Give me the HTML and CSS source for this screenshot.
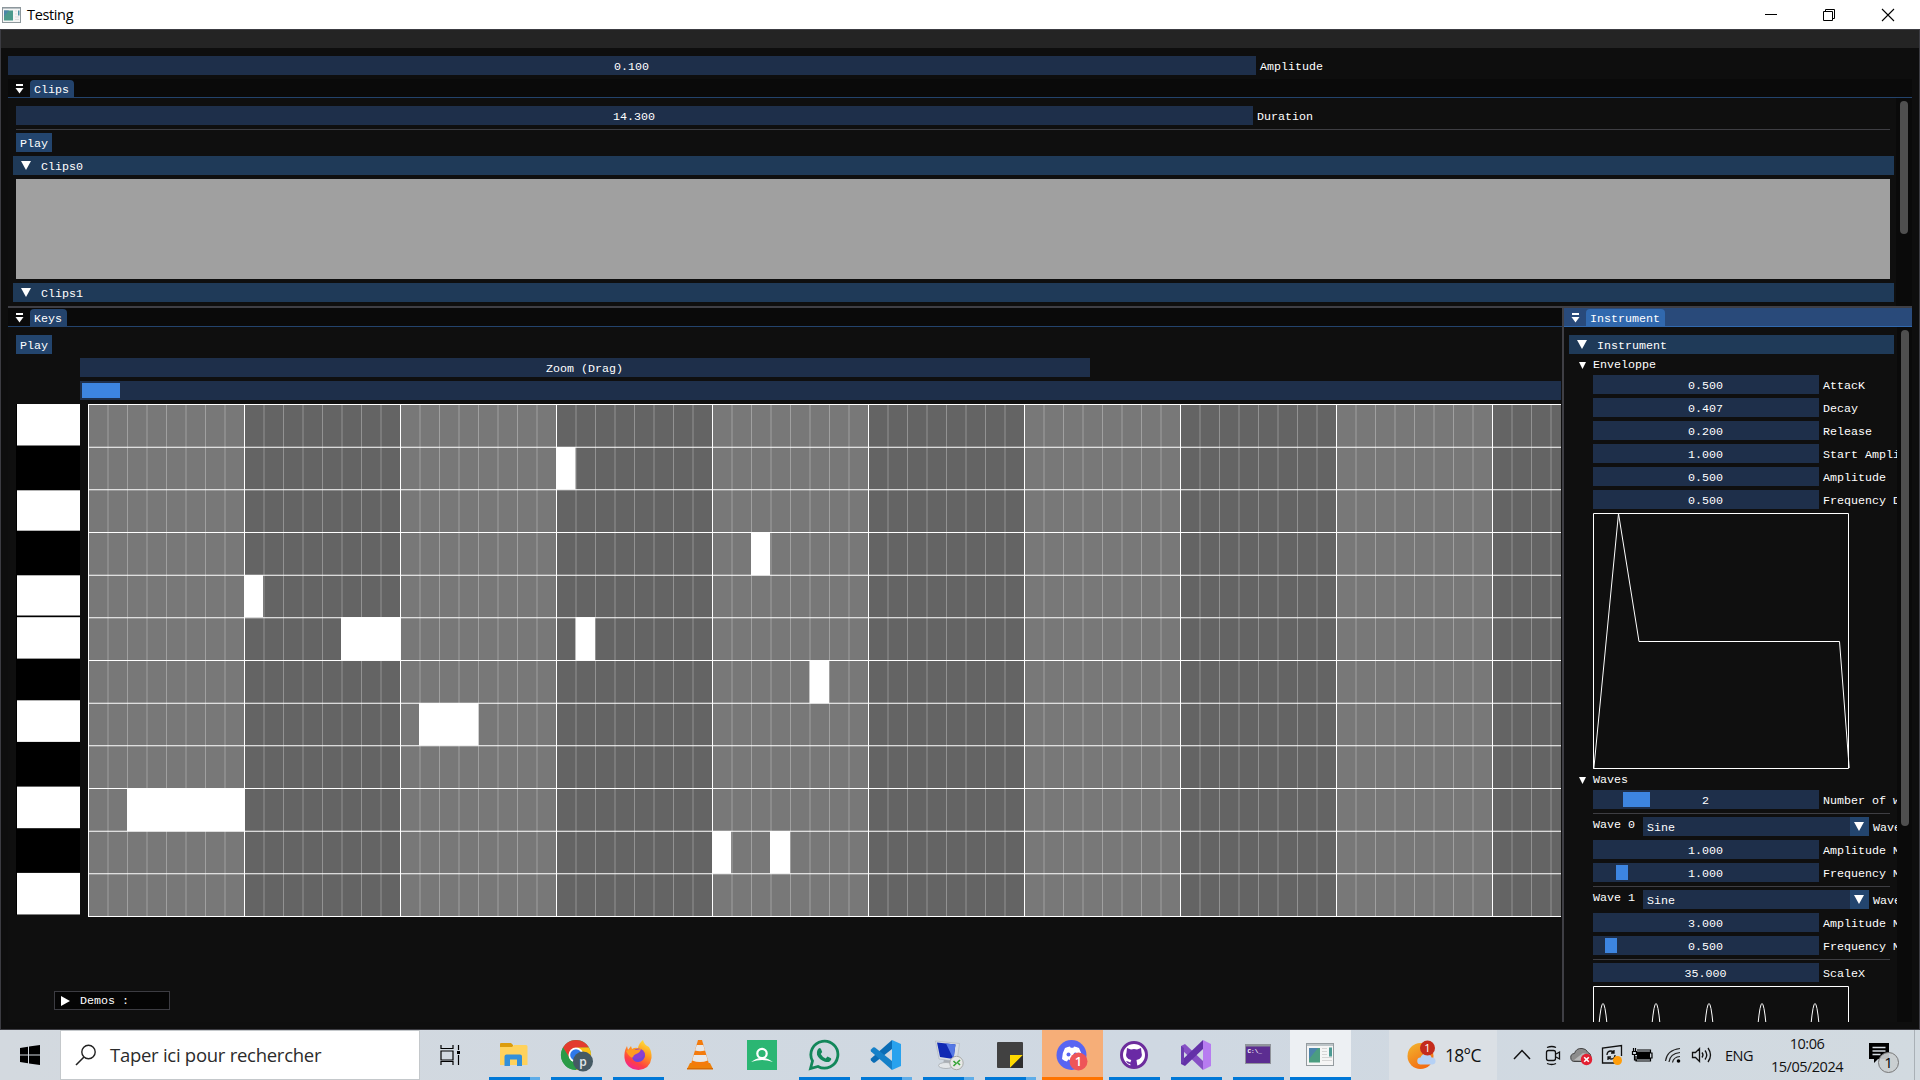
FILE: index.html
```
<!DOCTYPE html>
<html lang="fr">
<head>
<meta charset="utf-8">
<title>Testing</title>
<link rel="stylesheet" href="styles.css">
</head>
<body>
<header class="titlebar">
  <svg class="app-icon" width="19" height="16" viewBox="0 0 19 16"><rect x=".5" y=".5" width="18" height="15" fill="#f4f4f4" stroke="#8d979c"/><path d="M1 1.5h17" stroke="#b9c1c5"/><rect x="2" y="3.500" width="9" height="10" fill="#4b9a8c"/><path d="M2 3.500h5l-5 6z" fill="#4a86a8"/><path d="M13 4h2M13 7h2M13 10h4M13 12.500h4" stroke="#ddd"/><rect x="16" y="3.500" width="1.500" height="5" fill="#4c93a5"/></svg>
  <span class="title">Testing</span>
  <div class="window-buttons">
    <svg width="14" height="14" viewBox="0 0 14 14"><path d="M2 6.500h12" stroke="#000"/></svg>
    <svg width="14" height="14" viewBox="0 0 14 14"><path d="M1.500 3.500h9v9h-9zM3.500 3.500v-2h9v9h-2" fill="none" stroke="#000"/></svg>
    <svg width="14" height="14" viewBox="0 0 14 14"><path d="M1 1l12 12M13 1L1 13" stroke="#000" stroke-width="1.100"/></svg>
  </div>
</header>

<main class="app">
  <div class="menubar"></div>
  <div class="dock">
    <div class="row"><div class="slider amp">0.100</div><span class="label">Amplitude</span></div>

    <section class="panel clips">
      <div class="tabbar"><svg class="menu-mark" width="9" height="10"><path d="M1 0h7v2H1z" fill="#fff"/><path d="M.5 4h8L4.500 9.500z" fill="#fff"/></svg><span class="tab">Clips</span></div>
      <div class="clips-body">
        <div class="clips-content">
          <div class="row"><div class="slider duration">14.300</div><span class="label">Duration</span></div>
          <div class="separator"></div>
          <div class="button">Play</div>
          <div class="header"><svg class="arrow" width="10" height="9"><path d="M0 0h10L5 9z" fill="#fff"/></svg>Clips0</div>
          <div class="clip-canvas"></div>
          <div class="header"><svg class="arrow" width="10" height="9"><path d="M0 0h10L5 9z" fill="#fff"/></svg>Clips1</div>
        </div>
        <div class="scrollbar"><div class="thumb clips-thumb"></div></div>
      </div>
    </section>

    <div class="lower">
      <section class="panel keys">
        <div class="tabbar"><svg class="menu-mark" width="9" height="10"><path d="M1 0h7v2H1z" fill="#fff"/><path d="M.5 4h8L4.500 9.500z" fill="#fff"/></svg><span class="tab">Keys</span></div>
        <div class="keys-content">
          <div class="button">Play</div>
          <div class="slider zoom">Zoom (Drag)</div>
          <div class="slider scroll-x"><div class="grab scroll-grab"></div></div>
          <div class="roll">
            <svg class="piano" width="64" height="511" viewBox="0 0 64 511">
              <rect width="64" height="511" fill="#000"/>
              <g fill="#fff">
                <rect x="1" y="0" width="63" height="41.500"/>
                <rect x="1" y="86.300" width="63" height="40.400"/>
                <rect x="1" y="171.300" width="63" height="40.200"/>
                <rect x="1" y="213.200" width="63" height="41.400"/>
                <rect x="1" y="296.300" width="63" height="41.600"/>
                <rect x="1" y="382.600" width="63" height="41.600"/>
                <rect x="1" y="468.900" width="63" height="41.600"/>
              </g>
            </svg>
            <svg class="grid" width="1473" height="513" viewBox="0 0 1473 513">
              <rect width="1473" height="513" fill="#787878"/>
              <path d="M156 256.500H1473" stroke="#646464" stroke-width="513" stroke-dasharray="156"/>
              <path d="M0 256.500H1473" stroke="#fff" stroke-opacity=".3" stroke-width="513" stroke-dasharray="1 18.500"/>
              <path d="M0 256.500H1473" stroke="#fff" stroke-width="513" stroke-dasharray="1 155"/>
              <path d="M736.500 0V513" stroke="#fff" stroke-width="1473" stroke-dasharray="1 41.6667"/>
              <g fill="#fff">
                <rect x="468" y="43" width="19.500" height="42.500"/>
                <rect x="663" y="128" width="19" height="43"/>
                <rect x="156" y="171" width="19" height="42"/>
                <rect x="253" y="213" width="60" height="43"/>
                <rect x="487.500" y="213" width="19.500" height="43"/>
                <rect x="721.500" y="256" width="19.500" height="43"/>
                <rect x="331" y="299" width="59.500" height="42.500"/>
                <rect x="39" y="384" width="118" height="43"/>
                <rect x="624" y="427" width="19" height="42.500"/>
                <rect x="682" y="427" width="20" height="42.500"/>
              </g>
            </svg>
          </div>
          <div class="demos"><svg width="9" height="10"><path d="M0 0l9 5-9 5z" fill="#fff"/></svg>Demos :</div>
        </div>
      </section>

      <section class="panel instrument">
        <div class="tabbar focused"><svg class="menu-mark" width="9" height="10"><path d="M1 0h7v2H1z" fill="#fff"/><path d="M.5 4h8L4.500 9.500z" fill="#fff"/></svg><span class="tab">Instrument</span></div>
        <div class="inst-body">
          <div class="inst-content">
            <div class="header"><svg class="arrow" width="10" height="9"><path d="M0 0h10L5 9z" fill="#fff"/></svg>Instrument</div>
            <div class="tree"><svg width="7" height="7"><path d="M0 0h7L3.500 7z" fill="#fff"/></svg>Enveloppe</div>
            <div class="row"><div class="slider">0.500</div><span class="label">AttacK</span></div>
            <div class="row"><div class="slider">0.407</div><span class="label">Decay</span></div>
            <div class="row"><div class="slider">0.200</div><span class="label">Release</span></div>
            <div class="row"><div class="slider">1.000</div><span class="label">Start Amplitude</span></div>
            <div class="row"><div class="slider">0.500</div><span class="label">Amplitude</span></div>
            <div class="row"><div class="slider">0.500</div><span class="label">Frequency D</span></div>
            <svg class="plot" width="257" height="256" viewBox="0 0 257 256"><g fill="none" stroke="#fff"><path d="M.5.500h255v255H.5z"/><path d="M.8 256L25.500.500 46 128.500H246.500L256.200 255"/></g></svg>
            <div class="tree"><svg width="7" height="7"><path d="M0 0h7L3.500 7z" fill="#fff"/></svg>Waves</div>
            <div class="row"><div class="slider">2<div class="grab count-grab"></div></div><span class="label">Number of waves</span></div>
            <div class="separator"></div>
            <div class="row"><span class="wave-name">Wave 0</span><div class="combo">Sine<span class="drop"><svg width="10" height="9"><path d="M0 0h10L5 9z" fill="#fff"/></svg></span></div><span class="label">Wave</span></div>
            <div class="row"><div class="slider">1.000</div><span class="label">Amplitude M</span></div>
            <div class="row"><div class="slider">1.000<div class="grab freq0-grab"></div></div><span class="label">Frequency M</span></div>
            <div class="separator"></div>
            <div class="row"><span class="wave-name">Wave 1</span><div class="combo">Sine<span class="drop"><svg width="10" height="9"><path d="M0 0h10L5 9z" fill="#fff"/></svg></span></div><span class="label">Wave</span></div>
            <div class="row"><div class="slider">3.000</div><span class="label">Amplitude M</span></div>
            <div class="row"><div class="slider">0.500<div class="grab freq1-grab"></div></div><span class="label">Frequency M</span></div>
            <div class="separator"></div>
            <div class="row"><div class="slider">35.000</div><span class="label">ScaleX</span></div>
            <svg class="plot" width="257" height="256" viewBox="0 0 257 256"><g fill="none" stroke="#fff"><path d="M.5.500h255v255H.5z"/><path d="M6 38Q8 17.500 10 17.500T14 38M59 38Q61 17.500 63 17.500T67 38M112 38Q114 17.500 116 17.500T120 38M165 38Q167 17.500 169 17.500T173 38M218 38Q220 17.500 222 17.500T226 38"/></g></svg>
          </div>
          <div class="scrollbar"><div class="thumb inst-thumb"></div></div>
        </div>
      </section>
    </div>
  </div>
</main>

<footer class="taskbar">
  <div class="start"><svg width="20" height="20" viewBox="0 0 20 20"><path d="M0 3l8-1.200v7.700H0zM9 1.600L20 0v9.500H9zM0 10.500h8v7.700L0 17zM9 10.500h11V20L9 18.400z"/></svg></div>
  <div class="search"><svg width="22" height="22" viewBox="0 0 22 22"><circle cx="13.500" cy="8" r="6.700" fill="none" stroke="#222" stroke-width="1.400"/><path d="M9 13L1 21" stroke="#222" stroke-width="1.600"/></svg><span class="search-text">Taper ici pour rechercher</span></div>
  <div class="task-view"><svg width="20" height="20" viewBox="0 0 20 20" fill="none" stroke="#000" stroke-width="1.200"><path d="M1 0v3.500h12V0M1 6h12v9H1zM1 20v-3.500h12V20M18.500 0v5M18.500 10v10"/><path d="M17 6h3v3h-3z" fill="#000" stroke="none"/></svg></div>
  <nav class="tasks">
    <div class="task open multi"><svg class="explorer" width="32" height="32" viewBox="0 0 32 32"><path d="M4 5q0-1 1-1h10l2 2v2H4z" fill="#dc9c0c"/><path d="M4 8h12l2-2h12q1.500 0 1.500 1.500V26H4z" fill="#ffd25c"/><path d="M8.500 27V17.500q0-2 2-2h13.500q2 0 2 2V27h-5v-6.500h-7V27z" fill="#3390da"/></svg></div>
    <div class="task open"><svg class="chrome" width="34" height="34" viewBox="0 0 34 34"><circle cx="16" cy="16" r="15" fill="#34a853"/><path d="M3 8.500A15 15 0 0 1 29 8.500L16 9 10 20z" fill="#e33b2e"/><path d="M29 8.500A15 15 0 0 1 16 31l6.500-11.500L17 8.500z" fill="#fbc116"/><path d="M3 8.500A15 15 0 0 0 16 31l4-8-10-3z" fill="#2a9b48"/><circle cx="16" cy="16" r="7.500" fill="#fff"/><circle cx="16" cy="16" r="5.800" fill="#2f79ea"/><circle cx="23" cy="22.500" r="10" fill="#455a64"/><text x="23" y="26.500" text-anchor="middle" class="avatar">p</text></svg></div>
    <div class="task open"><svg width="32" height="32" viewBox="0 0 32 32"><defs><linearGradient id="ff" x1=".8" y1="0" x2=".3" y2="1"><stop offset="0" stop-color="#ffe73e"/><stop offset=".4" stop-color="#ff9a1f"/><stop offset=".75" stop-color="#ff4141"/><stop offset="1" stop-color="#f0229a"/></linearGradient></defs><path d="M5 7l1 4 3-4 1 3q3-2 6-1Q17 4 21 1q1 5 6 7 3 5 2.500 11-1.500 11-13 12Q4 30 2.500 19 2 12 5 7z" fill="url(#ff)"/><circle cx="16.500" cy="16" r="6.500" fill="#8a3fd2"/><path d="M4 12q4-3 9-1l6-1q-1 4-5 5-3 1-3 4-4-1-7-7z" fill="#ff9b22"/><path d="M10 18q6 5 13-2-1 7-7 7-5 0-6-5z" fill="#7145d8"/></svg></div>
    <div class="task"><svg class="vlc" width="32" height="32" viewBox="0 0 32 32"><path d="M6 24h20l3 6H3z" fill="#ee8008"/><path d="M14 1h4l7 24q-9 4-18 0z" fill="#f47b0c"/><path d="M12.700 6h6.600l1.700 5.500q-5 1.500-10 0zM9.800 16h12.400l1.600 5.500q-7.800 3-15.600 0z" fill="#e6e8ea"/><path d="M3 29h26v1.500H3z" fill="#d66b05"/></svg></div>
    <div class="task"><svg width="30" height="30" viewBox="0 0 30 30"><rect width="30" height="30" fill="#2bb673"/><circle cx="15" cy="13.500" r="4.700" fill="none" stroke="#fff" stroke-width="2.200"/><path d="M4 22q5-3.500 8.500-4h5q3.500.500 8.500 4-6-2-11-2t-11 2z" fill="#fff"/></svg></div>
    <div class="task open"><svg width="32" height="32" viewBox="0 0 32 32"><path d="M2.500 29.500l2-7.500A13.500 13.500 0 1 1 10 27.500z" fill="none" stroke="#12875a" stroke-width="2.800"/><path d="M9.500 11q2-3.500 3.500-1l1.200 3-1.500 2q2 3.500 5 4.500l1.800-2 3.500 1.700q1 1-1 3-2 1.500-5 .5-6-2-8-7-.5-2.500.5-4.700z" fill="#12875a"/></svg></div>
    <div class="task open multi"><svg width="32" height="32" viewBox="0 0 32 32"><path d="M22 1l9 4v22l-9 4z" fill="#29a2ee"/><path d="M22 1v9L5 23.500q-1 .5-2 0l-2-2q-.7-1 0-2z" fill="#0a6cb5"/><path d="M22 31v-9L5 8.500q-1-.5-2 0l-2 2q-.7 1 0 2z" fill="#1580c8"/></svg></div>
    <div class="task open multi"><svg width="32" height="32" viewBox="0 0 32 32"><path d="M12 20h7l1 5H11z" fill="#a9aeb5"/><ellipse cx="14" cy="26.500" rx="7.500" ry="3" fill="#e3e6e9" stroke="#b0b5ba"/><path d="M3.500 2l24 2.500-2.500 18L7 20z" fill="#d9dee4" stroke="#adb3bb" stroke-width=".6"/><path d="M5 3.500l18.500 2-2 14.500L8 18z" fill="#102ab4"/><path d="M14 4.500l9.500 1-2 14.500z" fill="#5578e4"/><circle cx="24.500" cy="24" r="6.700" fill="#e7e8e6" stroke="#a7a9a7"/><path d="M21.500 22l2.500 2.500-2.500 2.500M28 21l-2.500 2.500 2.500 2.500" fill="none" stroke="#37a536" stroke-width="1.600"/></svg></div>
    <div class="task open multi"><svg width="26" height="26" viewBox="0 0 26 26"><rect width="26" height="26" rx="1" fill="#414141"/><path d="M13 13h13L13 26z" fill="#ffda00"/><path d="M26 13v13H13z" fill="#2e2e2e"/></svg></div>
    <div class="task open alert"><svg width="32" height="32" viewBox="0 0 32 32"><circle cx="15.500" cy="16" r="15" fill="#5865f2"/><path d="M9 9q3-1.500 5-1.500l.7 1.200h2.600L18 7.500q2 0 5 1.500 3 5 3 11-2.500 2-5 2.500l-1.200-2q-4 1-7.600 0l-1.200 2Q8.500 22 6 20q0-6 3-11z" fill="#fff"/><circle cx="12.500" cy="15.500" r="2" fill="#5865f2"/><circle cx="19.500" cy="15.500" r="2" fill="#5865f2"/><circle cx="22.500" cy="22.500" r="9" fill="#ee5558"/><text x="22.500" y="27" text-anchor="middle" class="badge-text">1</text></svg></div>
    <div class="task open"><svg width="30" height="30" viewBox="0 0 30 30"><circle cx="15" cy="15" r="12.500" fill="#fff" stroke="#6c2d9c" stroke-width="3"/><path d="M8 8l4 1.500q3-.8 6 0L22 8l.5 4.500q2 6-5 7.500l1 7h-7l-.2-3q-3 0-4.300-3 2 0 4.300 1.500l1-2.500q-7-1.500-4.800-7.500z" fill="#6a2aa5"/></svg></div>
    <div class="task open"><svg width="32" height="32" viewBox="0 0 32 32"><path d="M23 1l8 4v22l-8 4z" fill="#b77cf0"/><path d="M1 7l4-2 18 17v9L1 10z" fill="#8650c5"/><path d="M1 25l4 2L23 10V1L1 22z" fill="#6331a8"/><path d="M1 7l3 2v14l-3 2z" fill="#6b3cb0"/></svg></div>
    <div class="task open"><svg class="raised" width="26" height="20" viewBox="0 0 26 20"><rect x=".5" y=".5" width="25" height="19" fill="#5c2d91" stroke="#8f9299"/><path d="M0 1.500h26" stroke="#91969c" stroke-width="2"/><text x="2.500" y="9" class="prompt">C:\_</text></svg></div>
    <div class="task open current"><svg class="raised" width="28" height="23" viewBox="0 0 28 23"><rect x=".5" y=".5" width="27" height="22" fill="#f5f5f5" stroke="#949b9f"/><path d="M1 2h26" stroke="#bcc4c7" stroke-width="2"/><rect x="3" y="5" width="11" height="14.500" fill="#4b9d80"/><path d="M3 5h9L3 16z" fill="#4b83aa"/><path d="M16 5.500h5M16 8.500h5M16 11.500h5M16 14.500h10M16 17.500h10" stroke="#d5d5d5"/><rect x="23" y="4.500" width="3" height="9" fill="#4c9a93"/></svg></div>
  </nav>
  <div class="weather"><svg width="30" height="30" viewBox="0 0 30 30"><defs><linearGradient id="sun" x1="0" y1="0" x2=".6" y2="1"><stop offset="0" stop-color="#f2b72f"/><stop offset="1" stop-color="#f36b12"/></linearGradient></defs><circle cx="13.500" cy="16" r="13" fill="url(#sun)"/><path d="M14 24.500a3.500 3.500 0 0 1-.5-7q2-4.500 7-3.500 3 0 4 3.500a3.500 3.500 0 0 1 1 7z" fill="#b5d1f5"/><circle cx="20.500" cy="8" r="7.500" fill="#c42b1c"/><text x="20.500" y="12" text-anchor="middle" class="badge-small">1</text></svg><span class="temp">18°C</span></div>
  <div class="tray">
    <svg width="24" height="24" viewBox="0 0 24 24"><path d="M4 16l8-8.500 8 8.500" fill="none" stroke="#111" stroke-width="1.500"/></svg>
    <svg width="24" height="24" viewBox="0 0 24 24" fill="none" stroke="#111" stroke-width="1.300"><rect x="6.500" y="7.500" width="9" height="10" rx="2"/><path d="M16 11l3.500-2v7L16 14M7 4.500q5-2 9 0M7 20.500q5 2 9 0"/></svg>
    <svg width="24" height="24" viewBox="0 0 24 24"><path d="M5 18.500a4 4 0 0 1-.5-8Q6 5 12 5.500q4 0 6 4 3 1 3 4.500t-4 4.500z" fill="#8c8c8c" stroke="#444"/><path d="M4 17l9-7 7 2v6z" fill="#b6b6b6"/><circle cx="16.500" cy="16.500" r="5.700" fill="#e32133"/><path d="M14.200 14.200l4.600 4.600M18.800 14.200l-4.600 4.600" stroke="#fff" stroke-width="1.600"/></svg>
    <svg width="24" height="24" viewBox="0 0 24 24" fill="none" stroke="#111" stroke-width="1.300"><path d="M15 20H2.500V5L21.500 2.500V13M7 12q0-4 4-4 2 0 3 2M14 7v3h-3M15 12q0 4-4 4-2 0-3-2M8 17v-3h3"/><circle cx="17.500" cy="17.500" r="4.500" fill="#ff9d0a" stroke="none"/></svg>
    <svg width="24" height="24" viewBox="0 0 24 24"><path d="M6.500 8h14v9h-14z" fill="#000" stroke="#d3dae0"/><path d="M7 7h13.500v3H22v5h-1.500v3H6v-5M2.500 8.500h4v3h-4zM3.500 5v3M5.500 5v3M4.500 12v5H7" fill="none" stroke="#000" stroke-width="1.200"/></svg>
    <svg width="24" height="24" viewBox="0 0 24 24" fill="none" stroke="#222" stroke-width="1.200"><path d="M5.500 18Q7 7 20 5.500M9 19Q10 10.500 20 9.500M12.500 19.500Q13.500 14 20 13.500"/><circle cx="18.500" cy="18" r="1.800" fill="#000" stroke="none"/></svg>
    <svg width="24" height="24" viewBox="0 0 24 24" fill="none" stroke="#111" stroke-width="1.300"><path d="M2.500 9.500h3l4-4v13l-4-4h-3zM12 9.500q2 2.500 0 5M15 7.500q3.500 4.500 0 9M18 5q5 7 0 14"/></svg>
  </div>
  <span class="lang">ENG</span>
  <div class="clock"><span class="time">10:06</span><span class="date">15/05/2024</span></div>
  <svg class="notify" width="34" height="34" viewBox="0 0 34 34"><path d="M3 3h20v16H12l-4 4v-4H3z" fill="#000"/><path d="M6.500 7.500h13M6.500 11h13M6.500 14.500h8" stroke="#d5dce2" stroke-width="1.300"/><circle cx="22.500" cy="22.500" r="10" fill="#c9cdd0" fill-opacity=".93" stroke="#777"/><text x="22.500" y="28" text-anchor="middle" class="notify-text">1</text></svg>
  <div class="show-desktop"></div>
</footer>
</body>
</html>
```
FILE: styles.css
```
* { box-sizing: border-box; }
body {
  margin: 0;
  width: 1920px;
  height: 1080px;
  overflow: hidden;
  display: flex;
  flex-direction: column;
  background: #0f0f0f;
  font-family: "Open Sans", "Noto Sans", sans-serif;
}
svg { display: block; flex: none; }

/* Window title bar */
.titlebar { height: 29px; display: flex; align-items: center; background: #fff; padding: 0 25px 0 2px; flex: none; }
.title { margin: -1px 0 0 6px; font-size: 14.500px; letter-spacing: -0.350px; color: #000; }
.window-buttons { margin-left: auto; display: flex; gap: 45px; }

/* Immediate mode UI */
.app {
  height: 1001px;
  flex: none;
  overflow: hidden;
  border: 1px solid #3c3c42;
  background: #0e0e0e;
  font: 11.667px/23px "Liberation Mono", monospace;
  color: #fff;
  white-space: nowrap;
}
.menubar { height: 18px; background: #242424; }
.dock { padding: 8px 7px 0; height: 981px; display: flex; flex-direction: column; }
.row { display: flex; height: 19px; flex: none; }
.slider, .button, .header, .combo { height: 19px; flex: none; }
.slider { position: relative; background: #1e2f4a; text-align: center; padding-right: 1px; }
.amp { width: 1248px; }
.duration { width: 1237px; }
.label { margin-left: 4px; }
.button { width: 36px; text-align: center; background: #23456e; }
.separator { height: 1px; margin-bottom: -1px; background: #3e3e43; flex: none; }
.grab { position: absolute; top: 2px; height: 15px; background: #3d85e0; }

.panel { background: #0f0f0f; display: flex; flex-direction: column; overflow: hidden; }
.tabbar { height: 19px; flex: none; display: flex; padding-top: 1px; background: #0a0a0a; border-bottom: 1px solid #23436c; }
.menu-mark { margin: 4px 6px 0 7px; }
.tab { height: 17px; line-height: 20px; padding: 0 5px 0 4px; background: #23436c; border-radius: 4px 4px 0 0; }
.focused { background: #294a7a; border-color: #3169ae; }
.focused .tab { background: #3169ae; }
.header { display: flex; background: #1f3a58; }
.arrow { margin: 5px 10px 0 8px; }

.clips { margin-top: 4px; height: 227px; flex: none; }
.clips-body { display: flex; flex: 1; }
.clips-content { width: 1888px; padding: 8px 6px 0 8px; display: flex; flex-direction: column; gap: 4px; }
.clips-content .header { margin: 0 -4px 0 -3px; }
.clip-canvas { height: 100px; background: #a0a0a0; }
.scrollbar { flex: 1; padding: 3px 4px 0 4px; background: #0a0a0a; }
.thumb { width: 8px; border-radius: 4px; background: #4f4f4f; }
.clips-thumb { height: 133px; }

.lower { height: 716px; flex: none; border-top: 2px solid #3f3f45; display: flex; }
.keys { width: 1554px; flex: none; }
.keys-content { padding: 8px 1px 0 8px; display: flex; flex-direction: column; gap: 4px; }
.zoom { width: 1010px; margin-left: 64px; }
.scroll-x { margin-left: 64px; }
.scroll-grab { left: 2px; width: 38px; }
.roll { display: flex; justify-content: space-between; height: 513px; }
.demos { display: flex; align-items: center; gap: 10px; width: 116px; height: 19px; margin: 70px 0 0 38px; padding-left: 6px; line-height: 17px; background: #050505; border: 1px solid #3c3c42; padding-top: 1px; }

.instrument { flex: 1; border-left: 2px solid #3f3f45; }
.inst-body { display: flex; flex: 1; min-height: 0; }
.inst-content { width: 333px; flex: none; padding: 8px 0 0 29px; display: flex; flex-direction: column; gap: 4px; overflow: hidden; }
.inst-content .header { margin: 0 3px 0 -24px; }
.inst-content .slider { width: 226px; }
.inst-content .separator { margin-right: 7px; }
.tree { height: 13px; line-height: 13px; padding-top: 1px; margin-left: -14px; display: flex; align-items: center; gap: 7px; flex: none; }
.wave-name { width: 50px; line-height: 17px; flex: none; }
.combo { width: 226px; display: flex; justify-content: space-between; padding-left: 4px; background: #1e2f4a; }
.drop { width: 19px; padding: 5px 0 0 4px; background: #23456e; }
.inst-thumb { height: 496px; }
.count-grab { left: 30px; width: 27px; }
.freq0-grab { left: 23px; width: 12px; }
.freq1-grab { left: 12px; width: 12px; }

/* Taskbar */
.taskbar { height: 50px; flex: none; display: flex; align-items: center; background: linear-gradient(90deg, #d3d9df, #cfd8e2 60%, #d2dae0); color: #111; }
.start { width: 60px; padding-left: 20px; }
.search { width: 360px; height: 50px; display: flex; align-items: center; border: 1px solid #c4c8cb; background: #fff; padding-left: 14px; }
.search-text { margin: -2px 0 0 13px; font-size: 18.500px; letter-spacing: -0.270px; color: #2b2b2b; white-space: nowrap; }
.task-view { width: 63px; padding-left: 20px; }
.tasks { display: flex; height: 50px; }
.task { width: 62px; height: 50px; display: flex; align-items: center; justify-content: center; position: relative; }
.open::after { content: ""; position: absolute; left: 6px; right: 5px; bottom: 0; height: 3px; background: #0078d7; }
.multi::after { background: linear-gradient(90deg, #0078d7 41px, #5fade8 41px); }
.alert { background: linear-gradient(90deg, transparent 1px, #f6ae78 1px); }
.alert::after { left: 1px; right: 0; background: #ff7400; }
.current { background: linear-gradient(90deg, transparent 1px, #edf0f3 1px); }
.current::after { left: 1px; right: 0; }
.explorer { margin-left: -4px; }
.chrome { margin-left: 2px; margin-top: 2px; }
.vlc { margin-left: -1px; margin-top: -1px; }
.raised { margin-top: -2px; }
.avatar { font-size: 12px; font-weight: 600; fill: #e2e7ea; }
.badge-text { font-size: 13px; font-weight: 600; fill: #fff; }
.badge-small { font-size: 11px; fill: #fff; }
.prompt { font: bold 6px "Liberation Mono", monospace; fill: #fff; }
.weather { width: 108px; height: 50px; margin-left: 38px; padding-left: 18px; display: flex; align-items: center; gap: 8px; background: #dbe0e5; }
.temp { font-size: 17.500px; letter-spacing: -0.700px; }
.tray { display: flex; gap: 6px; margin-left: 13px; }
.lang { width: 30px; margin-left: 11px; font-size: 14.500px; letter-spacing: -0.500px; }
.clock { width: 80px; margin-left: 12px; display: flex; flex-direction: column; align-items: center; font-size: 14.500px; line-height: 23px; letter-spacing: -0.500px; }
.notify { margin-left: 19px; margin-top: 4px; }
.notify-text { font-size: 15px; fill: #000; }
.show-desktop { width: 6px; height: 50px; margin-left: auto; border-left: 1px solid #a9b0b6; }
```
